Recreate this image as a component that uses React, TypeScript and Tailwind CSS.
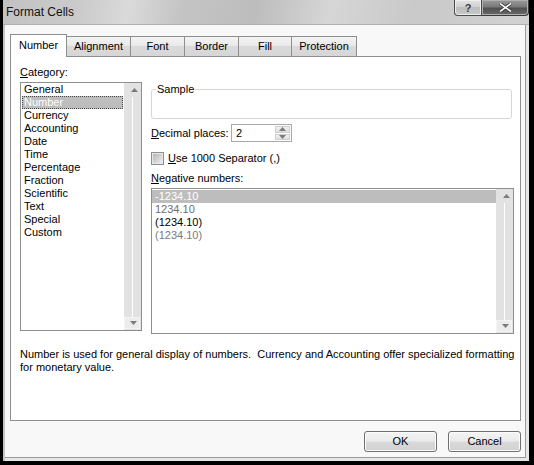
import { ReactNode } from "react";

const CATEGORIES = [
  "General",
  "Number",
  "Currency",
  "Accounting",
  "Date",
  "Time",
  "Percentage",
  "Fraction",
  "Scientific",
  "Text",
  "Special",
  "Custom",
];

// red entries come out grey in this screenshot
const NEGATIVES = [
  { label: "-1234.10", tone: "text-white", selected: true },
  { label: "1234.10", tone: "text-[#6e6e6e]", selected: false },
  { label: "(1234.10)", tone: "text-black", selected: false },
  { label: "(1234.10)", tone: "text-[#7a7a7a]", selected: false },
];

const Arrow = ({ up }: { up?: boolean }) => (
  <svg width="7" height="4" viewBox="0 0 7 4">
    <polygon points={up ? "0,4 7,4 3.5,0" : "0,0 7,0 3.5,4"} fill="#7c7c7c" />
  </svg>
);

const ScrollBar = () => (
  <div className="flex w-[17px] flex-col bg-[#e2e2e2]">
    <div className="flex h-[14px] items-center justify-end pr-[3px]">
      <Arrow up />
    </div>
    <div className="flex flex-1 justify-center">
      <div className="w-px bg-white" />
    </div>
    <div className="mb-[1px] mr-[1px] flex h-[12px] items-center justify-end border border-[#f4f4f4] bg-[#ececec] pr-[2px]">
      <Arrow />
    </div>
  </div>
);

const Tab = ({ children, w, active }: { children: ReactNode; w: string; active?: boolean }) =>
  active ? (
    <div
      className={`${w} relative z-10 -mb-px flex h-[23px] items-start justify-center border-x border-t border-[#8e8e8e] bg-white pt-[4px]`}
    >
      {children}
    </div>
  ) : (
    <div
      className={`${w} flex h-[20px] items-center justify-center border-r border-t border-[#8e8e8e] bg-[linear-gradient(#f4f4f4,#e8e8e8_50%,#dadada_50%,#d6d6d6)]`}
    >
      {children}
    </div>
  );

const Button = ({ children }: { children: ReactNode }) => (
  <button className="flex h-[21px] w-[73px] items-center justify-center rounded-[3px] border border-[#707070] bg-[linear-gradient(#f4f4f4,#ebebeb_48%,#d9d9d9_52%,#d2d2d2)] text-[11px] leading-[13px] text-black shadow-[inset_0_0_0_1px_#fbfbfb]">
    {children}
  </button>
);

export default function App() {
  return (
    <div className="flex h-[465px] w-[534px] flex-col overflow-hidden bg-black font-['Liberation_Sans',Arial,sans-serif] text-[11px] leading-[13px] text-black">
      {/* title bar */}
      <div className="ml-[3px] mr-[5px] flex h-[25px] items-start border-b border-[#b0b0b0] bg-[linear-gradient(100deg,#c2c2c2_0%,#cbcbcb_15%,#dadada_24%,#c4c4c4_34%,#bdbdbd_48%,#d6d6d6_62%,#c9c9c9_78%,#d2d2d2_100%)]">
        <div className="pl-[3px] pt-[5px] text-[12px] leading-[14px] text-[#111]">Format Cells</div>
        <div className="ml-auto flex">
          <div className="flex h-[16px] w-[28px] items-center justify-center rounded-bl-[4px] border border-t-0 border-[#4a4a4a] bg-[linear-gradient(#e4e4e4,#cfcfcf_50%,#bdbdbd_50%,#c8c8c8)] text-[11px] font-bold leading-[12px] text-[#f4f4f4] shadow-[inset_0_0_0_1px_#eeeeee]">
            <span className="text-[#3c3c3c]">?</span>
          </div>
          <div className="flex h-[16px] w-[47px] items-center justify-center rounded-br-[4px] border border-l-0 border-t-0 border-[#3a3a3a] bg-[linear-gradient(#9a9a9a,#7a7a7a_45%,#505050_55%,#6a6a6a)] shadow-[inset_0_0_0_1px_#b0b0b0]">
            <svg width="13" height="9" viewBox="0 0 13 9">
              <path d="M1 0.5 L12 8.5 M12 0.5 L1 8.5" stroke="#333" strokeWidth="3.2" />
              <path d="M1 0.5 L12 8.5 M12 0.5 L1 8.5" stroke="#fafafa" strokeWidth="1.6" />
            </svg>
          </div>
        </div>
      </div>

      {/* dialog body */}
      <div className="mb-[4px] ml-[3px] mr-[5px] flex flex-1 flex-col border-l-[2px] border-[#c4c4c4] bg-[#e6e6e6] pb-[3px] pr-[3px]">
        <div className="flex flex-1 flex-col border-b border-r border-[#9a9a9a] bg-[#f8f8f8] pl-[5px] pr-[4px] pt-[9px]">
          {/* tabs */}
          <div className="flex h-[22px] items-end">
            <Tab w="w-[57px]" active>
              Number
            </Tab>
            <Tab w="w-[64px]">Alignment</Tab>
            <Tab w="w-[54px]">Font</Tab>
            <Tab w="w-[54px]">Border</Tab>
            <Tab w="w-[53px]">Fill</Tab>
            <Tab w="w-[65px]">Protection</Tab>
          </div>

          {/* tab panel */}
          <div className="flex h-[365px] flex-col border border-[#8e8e8e] bg-white pl-[9px] pt-[9px]">
            <div className="flex gap-[9px]">
              {/* category */}
              <div className="flex w-[122px] flex-col">
                <div>
                  <span className="underline">C</span>ategory:
                </div>
                <div className="mt-[3px] flex h-[249px] border border-[#8e8e8e] bg-white">
                  <div className="flex flex-1 flex-col px-[1px]">
                    {CATEGORIES.map((c) =>
                      c === "Number" ? (
                        <div
                          key={c}
                          className="h-[13px] border border-dotted border-[#4a4a4a] bg-[#bdbdbd] pl-[1px] leading-[11px] text-white"
                        >
                          {c}
                        </div>
                      ) : (
                        <div key={c} className="h-[13px] pl-[2px]">
                          {c}
                        </div>
                      )
                    )}
                  </div>
                  <ScrollBar />
                </div>
              </div>

              {/* options */}
              <div className="flex w-[363px] flex-col">
                <fieldset className="mt-[17px] h-[36px] w-[361px] rounded-[3px] border border-[#d6d6d6]">
                  <legend className="ml-[4px] px-[1px]">Sample</legend>
                </fieldset>

                <div className="mt-[5px] flex h-[18px] items-center">
                  <div className="w-[80px]">
                    <span className="underline">D</span>ecimal places:
                  </div>
                  <div className="flex h-[18px] w-[61px] border border-[#a9a9a9] bg-white">
                    <div className="flex-1 pl-[4px] pt-[2px]">2</div>
                    <div className="my-[1px] mr-[1px] flex w-[15px] flex-col gap-px">
                      <div className="flex flex-1 items-center justify-center border border-[#cfcfcf] bg-[linear-gradient(#f2f2f2,#dedede)]">
                        <Arrow up />
                      </div>
                      <div className="flex flex-1 items-center justify-center border border-[#cfcfcf] bg-[linear-gradient(#f2f2f2,#dedede)]">
                        <Arrow />
                      </div>
                    </div>
                  </div>
                </div>

                <div className="mt-[10px] flex h-[13px] items-center">
                  <div className="h-[13px] w-[13px] border border-[#8e8e8e] bg-[linear-gradient(135deg,#aeaeae,#d4d4d4_55%,#f6f6f6)] shadow-[inset_0_0_0_1px_#e8e8e8]" />
                  <div className="ml-[4px]">
                    <span className="underline">U</span>se 1000 Separator (,)
                  </div>
                </div>

                <div className="mt-[7px] h-[13px]">
                  <span className="underline">N</span>egative numbers:
                </div>

                <div className="mt-[3px] flex h-[146px] border border-[#8e8e8e] bg-white">
                  <div className="flex flex-1 flex-col pt-[1px]">
                    {NEGATIVES.map((n, i) => (
                      <div
                        key={i}
                        className={`h-[13px] pl-[3px] ${n.tone} ${n.selected ? "bg-[#bdbdbd]" : ""}`}
                      >
                        {n.label}
                      </div>
                    ))}
                  </div>
                  <ScrollBar />
                </div>
              </div>
            </div>

            <p className="mt-[14px] whitespace-pre">
              {"Number is used for general display of numbers.  Currency and Accounting offer specialized formatting"}
              <br />
              for monetary value.
            </p>
          </div>

          {/* buttons */}
          <div className="mt-[10px] flex justify-end gap-[11px]">
            <Button>OK</Button>
            <Button>Cancel</Button>
          </div>
        </div>
      </div>
    </div>
  );
}
